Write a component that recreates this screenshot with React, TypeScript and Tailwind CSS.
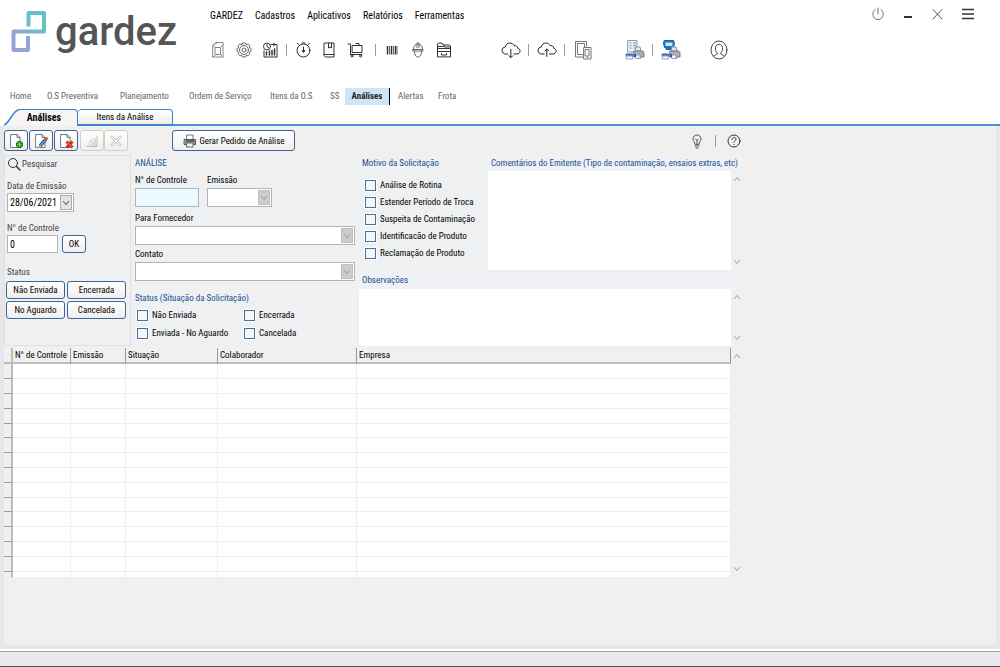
import React from 'react';
import clsx from 'clsx';

const MENU = ['GARDEZ', 'Cadastros', 'Aplicativos', 'Relatórios', 'Ferramentas'];

const NAV = [
  { label: 'Home', width: 'w-[37px]' },
  { label: 'O.S Preventiva', width: 'w-[73px]' },
  { label: 'Planejamento', width: 'w-[69px]' },
  { label: 'Ordem de Serviço', width: 'w-[81px]' },
  { label: 'Itens da O.S', width: 'w-[60px]' },
  { label: 'SS', width: 'w-[15px]' },
  { label: 'Análises', width: 'w-[45px]', active: true },
  { label: 'Alertas', width: 'w-10' },
  { label: 'Frota', width: 'w-10' },
];

const MOTIVOS = [
  'Análise de Rotina',
  'Estender Período de Troca',
  'Suspeita de Contaminação',
  'Identificacão de Produto',
  'Reclamação de Produto',
];

const STATUS = ['Não Enviada', 'Encerrada', 'Enviada - No Aguardo', 'Cancelada'];
const STATUS_FILTERS = ['Não Enviada', 'Encerrada', 'No Aguardo', 'Cancelada'];
const ROWS = Array.from({ length: 15 }, (_, i) => i);

interface IconProps {
  children: React.ReactNode;
  className?: string;
  size?: number;
}

function Icon({ children, className = 'size-5', size = 20 }: IconProps) {
  return (
    <svg
      viewBox={`0 0 ${size} ${size}`}
      className={clsx('shrink-0', className)}
      fill="none"
      stroke="currentColor"
      strokeLinecap="round"
      strokeLinejoin="round"
      aria-hidden="true"
    >
      {children}
    </svg>
  );
}

function IconButton({ label, children }: { label: string; children: React.ReactNode }) {
  return (
    <button type="button" aria-label={label} className="flex size-5 shrink-0 items-center justify-center text-[#333]">
      <Icon>{children}</Icon>
    </button>
  );
}

function Separator({ className }: { className?: string }) {
  return <span className={clsx('h-3 w-px shrink-0 bg-[#9a9a9a]', className)} />;
}

function Logo() {
  return (
    <a href="#" aria-label="gardez" className="flex w-[198px] shrink-0 items-start pt-[10px] pl-[11px]">
      <svg viewBox="0 0 36 42" className="mt-px h-[42px] w-9 shrink-0" fill="none" strokeWidth="4">
        <defs>
          <linearGradient id="logo" x1="1" y1="0" x2="0" y2="1">
            <stop offset="0" stopColor="#5fc4c3" />
            <stop offset="0.45" stopColor="#78b9cc" />
            <stop offset="0.65" stopColor="#8ea6d2" />
            <stop offset="1" stopColor="#94a3d3" />
          </linearGradient>
        </defs>
        <path stroke="url(#logo)" strokeLinejoin="round" d="M17.5 15.500V2H33v18.500H2.500V39H17V25" />
      </svg>
      <span className="pl-2 font-['Roboto',sans-serif] text-[40px] leading-[44px] font-medium text-[#555]">
        gardez
      </span>
    </a>
  );
}

function MainToolbar() {
  return (
    <div className="flex items-center gap-1.5 pl-2.5">
      <IconButton label="Combustível">
        <path stroke="#888" d="M5 5l2.500-2.500H15V17H5zM7 4.500L9.500 2.500M7.500 7.500h5v7h-5zM5 5.500l2.500 2M15 5l-2.500 2.500M5 17l2.500-2.500M15 17l-2.500-2.500" />
      </IconButton>
      <IconButton label="Configurações">
        <circle cx="10" cy="10" r="4.500" stroke="#666" />
        <circle cx="10" cy="10" r="2" stroke="#666" />
        <path stroke="#666" d="M8.500 3h3l.7 1.700 2-.7 1.500 1.500-.5 2 1.800 1v3l-1.800.8.5 2-1.500 1.500-2-.5-.7 1.700h-3l-.8-1.700-2 .5-1.500-1.500.5-2-1.700-1V8.700l1.700-1-.5-2L5.700 4l2 .7z" />
      </IconButton>
      <IconButton label="Agenda">
        <path d="M11 4.500h6V17H4v-6M14 3v3" />
        <path strokeWidth="1.500" d="M6.500 15v-3M9.500 15v-4M12 15v-4.500M14.500 15V9" />
        <circle cx="7" cy="6.500" r="3.500" />
        <path d="M7 4.500v2l1.500 1" />
      </IconButton>
      <Separator />
      <IconButton label="Cronômetro">
        <circle cx="10.500" cy="10.500" r="6.500" />
        <path d="M10.500 7v5M9 3h3M15 4.500l1.500-1M6 4.500l-1.500-1" />
        <circle cx="10.500" cy="11" r="1" fill="currentColor" />
      </IconButton>
      <IconButton label="Caderno">
        <path d="M5.500 3H15v14H6.500L5 15.500v-12zM5 14.500h10M9.500 3v5l1.500-1 1.500 1V3" />
      </IconButton>
      <IconButton label="Carrinho">
        <path d="M3 4h2.500v10.500M7.500 5.500H17v7H7.500zM5.500 14.500H17M11 3.500h3v2" />
        <circle cx="7" cy="16" r="1" />
        <circle cx="15.500" cy="16" r="1" />
      </IconButton>
      <Separator className="ml-1" />
      <IconButton label="Código de barras">
        <path strokeLinecap="butt" d="M5.500 6v8.500M9.500 6v8.500M13.500 6v8.500" strokeWidth="1.500" />
        <path strokeLinecap="butt" stroke="#666" d="M7.500 6v8.500M11.500 6v8.500M15 6v8.500" />
      </IconButton>
      <IconButton label="Capacete">
        <path stroke="#666" d="M5.500 9c0-3 2-5 4.500-5s4.500 2 4.500 5M5 9.500h10v1.500H5zM9 4v3.500M11 4v3.500M9 3h2M6.500 11c0 3.500 1 6 3.500 6s3.500-2.500 3.500-6" />
      </IconButton>
      <IconButton label="Arquivos">
        <path d="M3.500 16.500V4l1-1H8l1 2h6.500l1 1v10.500zM3.500 8.500h13M3.500 6.500H9M10 5v2h6.500M3.500 11.500h13M7.500 13.500v1.500h5v-1.500" />
      </IconButton>

      <div className="ml-[41px] flex items-center">
        <button type="button" aria-label="Receber dados" className="text-[#222]">
          <Icon>
            <path d="M6.500 14H4.700C2.700 14 1 12.500 1 10.500S2.500 7.200 4.300 7C4.700 4.500 6.500 3 8.800 3c2 0 3.500 1 4.200 2.600 2.200-.3 3.700 1 3.700 2.700 1.500.3 2.500 1.400 2.300 3-.2 1.600-1.300 2.700-3 2.700H13M9.800 9.500v8M8 15.800l1.800 1.900 1.900-1.900" />
          </Icon>
        </button>
        <Separator className="ml-[7px]" />
        <button type="button" aria-label="Enviar dados" className="ml-2 text-[#222]">
          <Icon>
            <path d="M7 14H4.700C2.700 14 1 12.500 1 10.500S2.500 7.200 4.300 7C4.700 4.500 6.500 3 8.800 3c2 0 3.500 1 4.200 2.600 2.200-.3 3.700 1 3.700 2.700 1.500.3 2.500 1.400 2.300 3-.2 1.600-1.300 2.700-3 2.700H12.500M9.800 16.500V9M8 11l1.800-2 1.900 2" />
          </Icon>
        </button>
        <Separator className="ml-[7px]" />
        <button type="button" aria-label="Dispositivos" className="ml-2 text-[#777]">
          <Icon>
            <path d="M10.500 17H2.500V1.500h11V6M4.500 3.500h7V7M4.500 3.500v11h6M11 7.500h7V19h-7zM12.500 9.500H16v6.500h-3.500zM14 17.500h1" />
          </Icon>
        </button>
        <button type="button" aria-label="Imprimir relatório" className="ml-8">
          <Icon>
            <path fill="#eef3f6" stroke="#8b9aa5" d="M3 .5h9V12H3z" />
            <path stroke="#5f87a8" d="M5 3h1M8.500 3h2M5 5.500h1M8.500 5.500h2M5 8h1M8.500 8h1" />
            <PrinterArt />
          </Icon>
        </button>
        <Separator className="ml-[7px]" />
        <button type="button" aria-label="Imprimir frota" className="ml-2">
          <Icon>
            <path fill="#1976c2" stroke="#1267ad" d="M3.500.500h9l1 3-1 4H11v2H5v-2H3.500l-1-4z" />
            <path fill="#c9e6fa" stroke="none" d="M4.500 2.500h7V6h-7z" />
            <PrinterArt />
          </Icon>
        </button>
        <button type="button" aria-label="Usuário" className="ml-[28px] text-[#444]">
          <Icon>
            <ellipse cx="10" cy="10" rx="8" ry="9" />
            <path d="M4.500 16c1-1.200 4-.8 3.800-3C6.500 11 6.300 9.500 6.500 7.500 6.700 5.500 8 4.300 10 4.300s3.300 1.200 3.500 3.200c.2 2 0 3.500-1.800 5.500-.2 2.200 2.800 1.800 3.800 3" />
          </Icon>
        </button>
      </div>
    </div>
  );
}

function PrinterArt() {
  return (
    <>
      <path fill="#e8edf5" stroke="#8790a0" d="M11 7h4l1 4h-5z" />
      <path fill="#a9adb4" stroke="#7b8088" d="M9 11h9l1 2v4h-3v1h-5v-1H9z" />
      <path fill="#4a78d6" stroke="#3661bd" d="M1.500 14h6v2h-6z" />
      <path fill="#f5f7fb" stroke="#93a3c0" d="M1.500 16h6v3h-6zM11 15h4v3.500h-4z" />
      <path fill="#2d57b0" stroke="none" d="M9 14h2v3H9z" />
    </>
  );
}

function WindowControls() {
  return (
    <div className="mt-1 mr-[22px] ml-auto flex items-start gap-[10px] text-[#333]">
      <IconButton label="Desligar">
        <path stroke="#777" d="M7 5.500C3.500 7.500 4 15.500 10 15.500s6.500-8 3-10M10 4v6" />
      </IconButton>
      <IconButton label="Minimizar">
        <path strokeWidth="2" strokeLinecap="butt" d="M6 13h8" />
      </IconButton>
      <IconButton label="Fechar">
        <path stroke="#555" d="M5 5.500l9 9.500M14 5.500L5 15" />
      </IconButton>
      <IconButton label="Menu">
        <path strokeWidth="1.500" strokeLinecap="butt" d="M4 5.500h12M4 10h12M4 14.500h12" />
      </IconButton>
    </div>
  );
}

function Tabs() {
  return (
    <div role="tablist" className="flex h-[17px] bg-white pl-1">
      <svg viewBox="0 0 15 17" className="h-[17px] w-[15px] shrink-0" aria-hidden="true">
        <path d="M0 16.500C6 14 8 2 15 .7V17H0z" fill="#f6f5f4" />
        <path d="M0 16C6 14 8 2 15 .7" fill="none" stroke="#3d83d3" strokeWidth="1.500" />
      </svg>
      <button
        type="button"
        role="tab"
        aria-selected="true"
        className="w-[59px] rounded-tr border-t border-r border-[#3d83d3] bg-[#f6f5f4] pr-2 text-[10px] font-bold"
      >
        Análises
      </button>
      <button
        type="button"
        role="tab"
        aria-selected="false"
        className="w-[95px] rounded-t border border-b-2 border-l-0 border-[#3d83d3] bg-linear-to-b from-white to-[#eeedeb]"
      >
        Itens da Análise
      </button>
      <div className="flex-1 border-b-2 border-[#4a90dc]" />
    </div>
  );
}

function ToolButton({ label, disabled, children }: { label: string; disabled?: boolean; children: React.ReactNode }) {
  return (
    <button
      type="button"
      aria-label={label}
      disabled={disabled}
      className={clsx(
        'flex h-[21px] w-6 shrink-0 items-center justify-center rounded-[3px] border bg-linear-to-b from-white to-[#f0eeec]',
        disabled ? 'border-[#d3cdc4]' : 'border-[#3a6596]',
      )}
    >
      <Icon size={16} className="size-4">
        {children}
      </Icon>
    </button>
  );
}

function PagePath() {
  return <path d="M3 1.500h6l3 3v10H3zM9 1.500v3h3" fill="#fff" stroke="#6f7b86" />;
}

function ActionBar() {
  return (
    <div className="flex h-[29px] items-center">
      <div className="flex gap-px">
        <ToolButton label="Novo">
          <PagePath />
          <path d="M11.500 8v7M8 11.500h7" stroke="#23711a" strokeWidth="4" strokeLinecap="butt" />
          <path d="M11.500 9v5M9 11.500h5" stroke="#6ed13f" strokeWidth="1.500" strokeLinecap="butt" />
        </ToolButton>
        <ToolButton label="Editar">
          <PagePath />
          <path d="M7 13l6-7" stroke="#2c6db8" strokeWidth="3.500" strokeLinecap="butt" />
          <path d="M7.500 12.500l5-6" stroke="#7cc0f0" />
          <path d="M12.500 6.500l1-1" stroke="#d45b3a" strokeWidth="3" />
          <path d="M6 14l1-1" stroke="#e0a54a" strokeWidth="2" />
        </ToolButton>
        <ToolButton label="Excluir">
          <PagePath />
          <path d="M8.500 8.500l6 6M14.500 8.500l-6 6" stroke="#d32a16" strokeWidth="3" strokeLinecap="butt" />
          <path d="M9.500 9.500l4 4" stroke="#f57c5c" />
        </ToolButton>
      </div>
      <div className="ml-0.5 flex">
        <ToolButton label="Salvar" disabled>
          <path d="M3 13.500h10v-10M6 13v-2M8.500 13V9M11 13V6M5 9l4-3" stroke="#bdbdbd" />
        </ToolButton>
        <ToolButton label="Cancelar" disabled>
          <path d="M4 4l8 8M12 4l-8 8" stroke="#cfcfcf" strokeWidth="3" />
          <path d="M4 4l8 8M12 4l-8 8" stroke="#fff" />
        </ToolButton>
      </div>
      <button
        type="button"
        className="ml-11 flex h-[21px] w-[123px] items-center justify-center gap-px rounded-[3px] border border-[#3a6596] bg-linear-to-b from-white to-[#f0eeec]"
      >
        <Icon size={16} className="size-4">
          <path d="M5 2h6v5H5z" fill="#fff" stroke="#777" />
          <path d="M2.500 6.500h11v5h-11z" fill="#8d949b" stroke="#4d545b" />
          <path d="M5 10h6v4H5z" fill="#eef6fb" stroke="#666" />
          <path d="M4.500 8h7" stroke="#333" />
        </Icon>
        Gerar Pedido de Análise
      </button>
      <div className="ml-auto flex items-center">
        <button type="button" aria-label="Dica" className="text-[#555]">
          <Icon size={16} className="size-4">
            <path d="M6 11C6 9 4 8.500 4 6c0-2.300 1.700-4 4-4s4 1.700 4 4c0 2.500-2 3-2 5zM6 13h4M7 15h2M6.500 6L8 7.500 9.500 6M8 7.500V11" />
          </Icon>
        </button>
        <Separator className="mx-[10px]" />
        <button type="button" aria-label="Ajuda" className="text-[#333]">
          <Icon size={16} className="size-4">
            <circle cx="8" cy="8" r="6" />
            <path d="M6 6.500c0-3 4-2.500 4-.3C10 7.500 8 7.700 8 9.300M8 11.500v.1" />
          </Icon>
        </button>
      </div>
    </div>
  );
}

function Chevron({ up }: { up?: boolean }) {
  return (
    <Icon size={8} className="size-2">
      <path d={up ? 'M1.500 5.500L4 2.500l2.500 3' : 'M1.500 2.500L4 5.500l2.500-3'} />
    </Icon>
  );
}

function Scrollbar() {
  return (
    <div className="flex w-[11px] shrink-0 flex-col items-center justify-between bg-[#f0f0f0] py-1 text-[#999]">
      <button type="button" aria-label="Rolar para cima"><Chevron up /></button>
      <button type="button" aria-label="Rolar para baixo"><Chevron /></button>
    </div>
  );
}

interface ComboProps {
  id: string;
  className?: string;
  value?: string;
  disabled?: boolean;
}

function Combo({ id, className, value = '', disabled }: ComboProps) {
  return (
    <div className={clsx('relative h-[19px]', className)}>
      <select id={id} disabled={disabled} className="size-full appearance-none border border-[#b0b3b8] bg-white px-0.5 text-[10px] opacity-100">
        <option>{value}</option>
      </select>
      <span
        className={clsx(
          'pointer-events-none absolute inset-y-0.5 right-0.5 flex w-3 items-center justify-center border',
          disabled ? 'border-[#bfbfbf] bg-[#ccc] text-[#999]' : 'border-[#adadad] bg-[#e3e3e3] text-[#444]',
        )}
      >
        <Chevron />
      </span>
    </div>
  );
}

function SmallButton({ children, className }: { children: React.ReactNode; className?: string }) {
  return (
    <button
      type="button"
      className={clsx(
        'flex min-w-0 items-center justify-center rounded-[3px] border border-[#3a6596] bg-linear-to-b from-white to-[#f0eeec] whitespace-nowrap',
        className,
      )}
    >
      {children}
    </button>
  );
}

function Check({ label }: { label: string }) {
  return (
    <label className="flex items-center gap-1 whitespace-nowrap">
      <input
        type="checkbox"
        className="size-[11px] shrink-0 appearance-none border border-[#44709c] bg-[#f6f6f6] outline outline-white checked:bg-[#44709c]"
      />
      {label}
    </label>
  );
}

function SearchPanel() {
  return (
    <section className="w-[127px] shrink-0 border border-[#e0e0e2] bg-[#eff0f2] text-[#444]">
      <h2 className="flex h-4 items-center gap-px pl-0.5">
        <Icon size={14} className="size-[14px] text-[#333]">
          <circle cx="6" cy="6" r="4.500" />
          <path d="M9.500 9.500L13 13" strokeWidth="1.500" />
        </Icon>
        Pesquisar
      </h2>
      <div className="px-[2px]">
        <label htmlFor="data" className="mt-[7px] block leading-[14px]">Data de Emissão</label>
        <Combo id="data" value="28/06/2021" className="w-[67px] text-black" />
        <label htmlFor="filtro-controle" className="mt-[9px] block leading-[14px]">N° de Controle</label>
        <div className="flex gap-1 text-black">
          <input id="filtro-controle" defaultValue="0" className="h-[18px] w-[51px] border border-[#b0b3b8] bg-white px-0.5 text-[10px]" />
          <SmallButton className="h-[18px] w-6">OK</SmallButton>
        </div>
        <p className="mt-3 leading-[14px]">Status</p>
      </div>
      <div className="mt-0.5 grid grid-cols-2 gap-0.5 pr-1 pl-px text-black">
        {STATUS_FILTERS.map((s) => (
          <SmallButton key={s} className="h-[18px]">{s}</SmallButton>
        ))}
      </div>
    </section>
  );
}

function AnalysisPanel() {
  return (
    <section className="flex w-[226px] shrink-0 flex-col gap-0.5">
      <div className="h-[132px] bg-[#eff0f2] px-[3px]">
        <h2 className="leading-[17px] text-[#1c4f92]">ANÁLISE</h2>
        <div className="mt-px flex gap-2">
          <div className="w-16">
            <label htmlFor="controle" className="block leading-[15px] whitespace-nowrap">N° de Controle</label>
            <input id="controle" className="h-[19px] w-full border border-[#b0b3b8] bg-[#eafaff] px-0.5" />
          </div>
          <div>
            <label htmlFor="emissao" className="block leading-[15px]">Emissão</label>
            <Combo id="emissao" disabled className="w-[65px]" />
          </div>
        </div>
        <label htmlFor="fornecedor" className="mt-1 block leading-[15px]">Para Fornecedor</label>
        <Combo id="fornecedor" disabled />
        <label htmlFor="contato" className="mt-0.5 block leading-[15px]">Contato</label>
        <Combo id="contato" disabled />
      </div>
      <fieldset className="flex-1 bg-[#eff0f2] px-[3px]">
        <legend className="float-left w-full leading-[18px] text-[#1c4f92]">Status (Situação da Solicitação)</legend>
        <div className="clear-both grid grid-cols-[107px_1fr] gap-y-0.5 pl-0.5 leading-4">
          {STATUS.map((s) => (
            <Check key={s} label={s} />
          ))}
        </div>
      </fieldset>
    </section>
  );
}

function RequestPanel() {
  return (
    <section className="flex min-w-0 flex-1 flex-col gap-0.5">
      <div className="flex h-[115px] gap-px">
        <fieldset className="w-[128px] shrink-0 bg-[#eff0f2] pl-[3px]">
          <legend className="float-left w-full leading-[17px] text-[#1c4f92]">Motivo da Solicitação</legend>
          <div className="clear-both flex flex-col pt-[5px] pl-[3px] leading-[17px]">
            {MOTIVOS.map((m) => (
              <Check key={m} label={m} />
            ))}
          </div>
        </fieldset>
        <div className="flex min-w-0 flex-1 flex-col bg-[#eff1f4]">
          <label htmlFor="comentarios" className="pl-[3px] leading-4 whitespace-nowrap text-[#1c4f92]">
            Comentários do Emitente (Tipo de contaminação, ensaios extras, etc)
          </label>
          <div className="flex flex-1">
            <textarea id="comentarios" className="min-w-0 flex-1 resize-none bg-white p-1" />
            <Scrollbar />
          </div>
        </div>
      </div>
      <div className="flex flex-1 flex-col bg-[#eff1f4]">
        <label htmlFor="observacoes" className="pl-[3px] leading-[17px] text-[#1c4f92]">Observações</label>
        <div className="flex flex-1">
          <textarea id="observacoes" rows={1} className="min-w-0 flex-1 resize-none bg-white p-1" />
          <Scrollbar />
        </div>
      </div>
    </section>
  );
}

function ResultsTable() {
  const head = 'border-r border-b-2 border-r-[#999] border-b-[#bbb] bg-[#f0f0f0] pl-0.5 text-left font-normal whitespace-nowrap';
  const cell = 'border-r border-b border-[#eee]';
  return (
    <div className="mt-0.5 flex h-[229px] bg-white">
      <div className="min-w-0 flex-1 overflow-hidden">
        <table className="w-full table-fixed border-separate border-spacing-0 leading-[13px]">
          <thead>
            <tr className="h-4">
              <th className="w-[9px] border-r-2 border-b-2 border-[#bbb] bg-[#f0f0f0]" />
              <th className={clsx(head, 'w-[58px]')}>N° de Controle</th>
              <th className={clsx(head, 'w-[55px]')}>Emissão</th>
              <th className={clsx(head, 'w-[92px]')}>Situação</th>
              <th className={clsx(head, 'w-[139px]')}>Colaborador</th>
              <th className={head}>Empresa</th>
            </tr>
          </thead>
          <tbody>
            {ROWS.map((r) => (
              <tr key={r} className="h-[15px] nth-[5n]:h-[14px]">
                <td className="border-r-2 border-b border-r-[#bbb] border-b-[#999] bg-[#f0f0f0]" />
                <td className={cell} />
                <td className={cell} />
                <td className={cell} />
                <td className={cell} />
                <td className={cell} />
              </tr>
            ))}
          </tbody>
        </table>
      </div>
      <Scrollbar />
    </div>
  );
}

export default function App() {
  return (
    <div className="flex min-h-screen flex-col bg-white font-['Roboto_Condensed','Liberation_Sans_Narrow','Liberation_Sans',sans-serif] text-[9px] leading-[14px] text-black">
      <header className="flex h-[88px] items-start">
        <Logo />
        <div className="pt-2">
          <nav className="flex gap-3 pl-3 text-[10px]">
            {MENU.map((m) => (
              <a key={m} href="#" className="leading-4">{m}</a>
            ))}
          </nav>
          <div className="mt-4">
            <MainToolbar />
          </div>
        </div>
        <WindowControls />
      </header>

      <nav className="flex h-[21px] pl-[10px] leading-[17px] text-[#666]">
        {NAV.map((n) => (
          <a
            key={n.label}
            href="#"
            className={clsx(
              'h-[17px] shrink-0 whitespace-nowrap',
              n.width,
              n.active && 'mr-2 border-r border-black bg-[#cfe4f7] text-center font-bold text-[#222]',
            )}
          >
            {n.label}
          </a>
        ))}
      </nav>

      <Tabs />
      <main className="flex-1 border-x-4 border-b-4 border-[#e8e6e8] bg-[#f1f0ee]">
        <div className="w-full max-w-[738px]">
          <ActionBar />
          <div className="flex h-[191px] gap-px">
            <SearchPanel />
            <AnalysisPanel />
            <RequestPanel />
          </div>
          <ResultsTable />
        </div>
      </main>
      <footer className="mt-0.5 h-4 border-t border-b border-t-[#a3a1a8] border-b-[#555] bg-[#e9e8ee]" />
    </div>
  );
}
